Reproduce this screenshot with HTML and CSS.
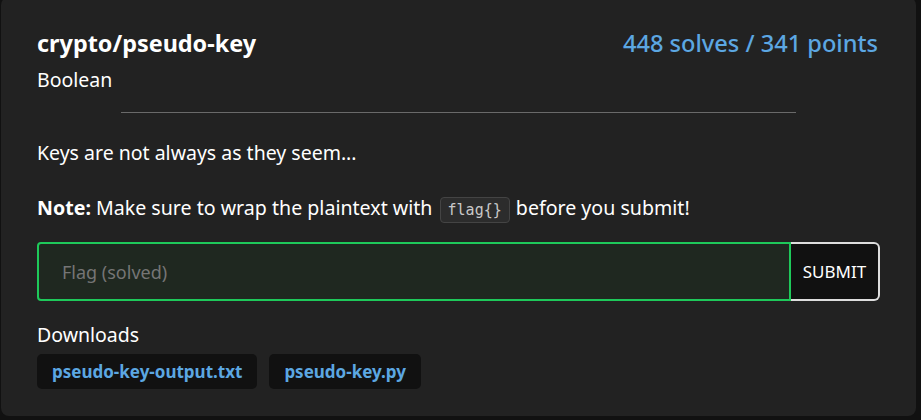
FILE: index.html
```html
<!DOCTYPE html>
<html>
<head>
<meta charset="utf-8">
<link rel="stylesheet" href="styles.css">
</head>
<body>
<div class="card">
  <div class="head">
    <div class="title">crypto/pseudo-key</div>
    <div class="stats">448 solves / 341 points</div>
  </div>
  <div class="author">Boolean</div>
  <hr class="rule">
  <p class="desc">Keys are not always as they seem...</p>
  <p class="note"><strong>Note:</strong> Make sure to wrap the plaintext with <code>flag{}</code> before you submit!</p>
  <form class="flag-form">
    <input class="flag-input" type="text" placeholder="Flag (solved)">
    <button class="submit" type="button">SUBMIT</button>
  </form>
  <div class="dl-label">Downloads</div>
  <div class="downloads">
    <a class="dl">pseudo-key-output.txt</a>
    <a class="dl">pseudo-key.py</a>
  </div>
</div>
</body>
</html>
```
FILE: styles.css
```css
html, body { margin: 0; padding: 0; }
body {
  background: #111111;
  font-family: "Noto Sans", "Open Sans", sans-serif;
  color: #ffffff;
  width: 921px;
  height: 420px;
  overflow: hidden;
}
.card {
  box-sizing: border-box;
  margin: -3px 0 0 1px;
  width: 915px;
  height: 419px;
  background: #222222;
  border-radius: 8px;
  padding: 30px 36px 0 36px;
}
.head {
  display: flex;
  justify-content: space-between;
  align-items: baseline;
  line-height: 32px;
  padding-right: 2px;
}
.title { font-size: 23.4px; font-weight: 700; }
.stats { font-size: 23.6px; color: #5ca7e2; font-weight: 500; }
.author { font-size: 19.5px; line-height: 26px; margin-top: 8px; }
.rule {
  width: 80%;
  border: 0;
  border-top: 1px solid #6a6a6a;
  margin: 19px auto 0;
}
.desc { font-size: 19.5px; line-height: 26px; margin: 27px 0 0; }
.note { font-size: 19.6px; line-height: 26px; margin: 29px 0 0; }
.note strong { font-weight: 700; }
code {
  display: inline-block;
  vertical-align: 0;
  margin: 0 1px 0 2px;
  font-family: "DejaVu Sans Mono", monospace;
  font-size: 15px;
  line-height: 20px;
  color: #c8c8c8;
  background: #2c2c2c;
  border: 1px solid #444444;
  border-radius: 4px;
  padding: 2px 7px;
}
.flag-form {
  display: flex;
  margin-top: 19px;
  height: 59px;
}
.flag-input {
  flex: 1;
  box-sizing: border-box;
  background: #1f2820;
  border: 2px solid #1ec95a;
  border-radius: 4px 0 0 4px;
  color: #fff;
  font: 18px "Noto Sans", sans-serif;
  padding: 0 23px;
  outline: none;
}
.flag-input::placeholder { color: #757575; }
.submit {
  box-sizing: border-box;
  width: 89px;
  background: #111111;
  border: 2px solid #dddddd;
  border-left: 0;
  border-radius: 0 6px 6px 0;
  color: #ffffff;
  font: 17px "Noto Sans", sans-serif;
  padding: 0;
}
.dl-label { font-size: 19.5px; line-height: 26px; margin-top: 21px; }
.downloads { display: flex; gap: 12px; margin-top: 6px; }
.dl {
  background: #111111;
  color: #5ca7e2;
  font-weight: 700;
  font-size: 17px;
  line-height: 25px;
  border-radius: 5px;
  padding: 5px 15px;
}
```
